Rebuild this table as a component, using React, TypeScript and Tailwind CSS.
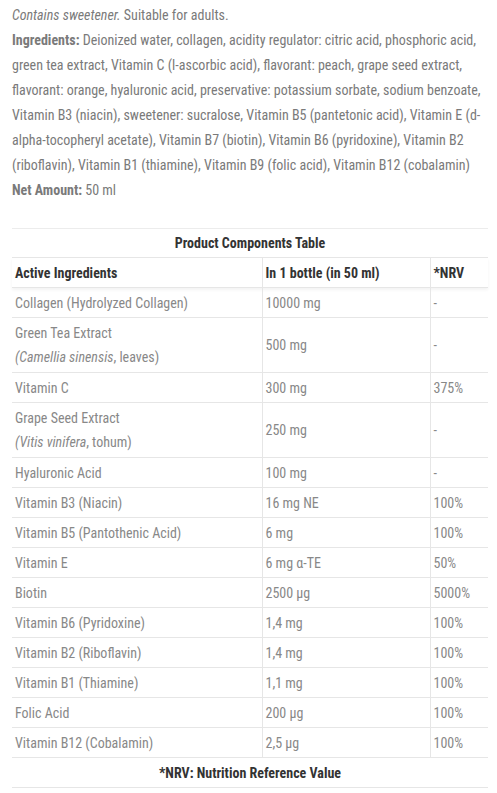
import React from 'react';

type Row = {
  name: React.ReactNode;
  amount: string;
  nrv: string;
  tall?: boolean;
};

const rows: Row[] = [
  { name: 'Collagen (Hydrolyzed Collagen)', amount: '10000 mg', nrv: '-' },
  {
    name: (
      <>
        Green Tea Extract
        <br />
        <em>(Camellia sinensis</em>, leaves)
      </>
    ),
    amount: '500 mg',
    nrv: '-',
    tall: true,
  },
  { name: 'Vitamin C', amount: '300 mg', nrv: '375%' },
  {
    name: (
      <>
        Grape Seed Extract
        <br />
        <em>(Vitis vinifera</em>, tohum)
      </>
    ),
    amount: '250 mg',
    nrv: '-',
    tall: true,
  },
  { name: 'Hyaluronic Acid', amount: '100 mg', nrv: '-' },
  { name: 'Vitamin B3 (Niacin)', amount: '16 mg NE', nrv: '100%' },
  { name: 'Vitamin B5 (Pantothenic Acid)', amount: '6 mg', nrv: '100%' },
  { name: 'Vitamin E', amount: '6 mg α-TE', nrv: '50%' },
  { name: 'Biotin', amount: '2500 µg', nrv: '5000%' },
  { name: 'Vitamin B6 (Pyridoxine)', amount: '1,4 mg', nrv: '100%' },
  { name: 'Vitamin B2 (Riboflavin)', amount: '1,4 mg', nrv: '100%' },
  { name: 'Vitamin B1 (Thiamine)', amount: '1,1 mg', nrv: '100%' },
  { name: 'Folic Acid', amount: '200 µg', nrv: '100%' },
  { name: 'Vitamin B12 (Cobalamin)', amount: '2,5 µg', nrv: '100%' },
];

const font = "font-['Roboto_Condensed','Liberation_Sans_Narrow',Roboto,sans-serif]";

export default function App() {
  return (
    <div className={`${font} min-h-[793px] bg-white px-3 pt-[3px] text-[14px] text-[#7a7a7a]`}>
      <div className="leading-[25px]">
        <p>
          <em>Contains sweetener.</em> Suitable for adults.
        </p>
        <p>
          <strong className="font-bold">Ingredients:</strong> Deionized water, collagen, acidity regulator: citric
          acid, phosphoric acid, green tea extract, Vitamin C (l-ascorbic acid), flavorant: peach, grape seed extract,
          flavorant: orange, hyaluronic acid, preservative: potassium sorbate, sodium benzoate, Vitamin B3 (niacin),
          sweetener: sucralose, Vitamin B5 (pantetonic acid), Vitamin E (d-alpha-tocopheryl acetate), Vitamin B7
          (biotin), Vitamin B6 (pyridoxine), Vitamin B2 (riboflavin), Vitamin B1 (thiamine), Vitamin B9 (folic acid),
          Vitamin B12 (cobalamin)
        </p>
        <p>
          <strong className="font-bold">Net Amount:</strong> 50 ml
        </p>
      </div>

      <table className="mt-[25px] w-[476px] border-collapse text-left leading-[24px]">
        <thead>
          <tr className="border-t border-[#ececec]">
            <th colSpan={3} className="h-[29px] py-0 text-center font-bold text-[#333]">
              Product Components Table
            </th>
          </tr>
          <tr className="border-t border-b border-[#e6e6e6] shadow-[0_2px_3px_rgba(0,0,0,0.05)]">
            <th className="h-[30px] w-[250px] px-[3px] py-0 font-bold text-[#333]">Active Ingredients</th>
            <th className="w-[168px] border-l border-[#e6e6e6] px-[3px] py-0 font-bold text-[#333]">
              In 1 bottle (in 50 ml)
            </th>
            <th className="border-l border-[#e6e6e6] px-[3px] py-0 font-bold text-[#333]">*NRV</th>
          </tr>
        </thead>
        <tbody className="text-[#888]">
          {rows.map((r, i) => (
            <tr key={i} className="border-b border-[#e6e6e6]">
              <td className={`px-[3px] ${r.tall ? 'h-[55px] py-[3px]' : 'h-[30px] py-0'}`}>{r.name}</td>
              <td className="border-l border-[#e6e6e6] px-[3px] py-0">{r.amount}</td>
              <td className="border-l border-[#e6e6e6] px-[3px] py-0">{r.nrv}</td>
            </tr>
          ))}
          <tr className="border-b border-[#e6e6e6]">
            <td colSpan={3} className="h-[30px] py-0 text-center font-bold text-[#333]">
              *NRV: Nutrition Reference Value
            </td>
          </tr>
        </tbody>
      </table>
    </div>
  );
}
